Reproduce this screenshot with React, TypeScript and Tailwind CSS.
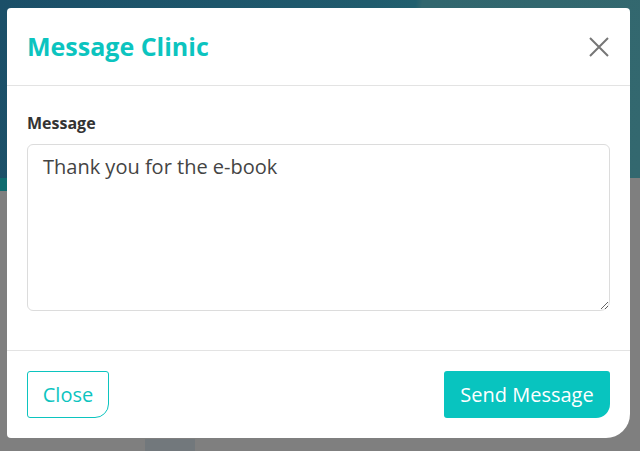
import React from "react";

export default function App() {
  return (
    <div className="relative w-[640px] h-[451px] overflow-hidden bg-[#7f7f7f]" style={{ fontFamily: '"Open Sans", "Noto Sans", sans-serif' }}>
      {/* page behind the overlay */}
      <div className="h-[178px] bg-[linear-gradient(100deg,#1b4f68_0%,#205b6d_55%,#215f6e_62%,#31666e_63%,#33686f_100%)]" />
      <div className="h-[13px] w-[10px] bg-[#0f6c6f]" />
      <div className="absolute left-[145px] top-[439px] w-[50px] h-[12px] bg-[#72787c]" />

      {/* dialog */}
      <div className="absolute left-[7px] top-[8px] w-[623px] h-[430px] bg-white rounded-[4px] rounded-br-[24px] flex flex-col">
        <div className="h-[78px] flex items-center justify-between pl-[20px] pr-[20px] border-b border-[#e3e3e3]">
          <h2 className="text-[25px] font-bold text-[#0cc4bf] leading-none -mt-[1px]">Message Clinic</h2>
          <button className="w-[22px] h-[22px] flex items-center justify-center">
            <svg width="22" height="22" viewBox="0 0 22 22" fill="none" stroke="#767676" strokeWidth="2">
              <path d="M2 2 L20 20 M20 2 L2 20" />
            </svg>
          </button>
        </div>
        <div className="flex-1 px-[20px] pt-[26px] flex flex-col border-b border-[#e3e3e3]">
          <label className="text-[16px] font-bold text-[#333] leading-[22px]">Message</label>
          <textarea
            className="mt-[10px] h-[167px] w-full border border-[#dcdcdc] rounded-[6px] rounded-br-[10px] px-[15px] py-[7px] text-[20px] leading-[30px] text-[#444] outline-none resize-y"
            style={{ fontFamily: '"Open Sans", "Noto Sans", sans-serif' }}
            defaultValue="Thank you for the e-book"
          />
        </div>
        <div className="h-[87px] flex items-center justify-between px-[20px]">
          <button className="w-[82px] h-[47px] border border-[#0cc4bf] text-[#0cc4bf] text-[20px] rounded-[3px] rounded-br-[14px]">Close</button>
          <button className="w-[166px] h-[47px] bg-[#08c4bf] text-white text-[20px] rounded-[3px] rounded-br-[14px]">Send Message</button>
        </div>
      </div>
    </div>
  );
}
